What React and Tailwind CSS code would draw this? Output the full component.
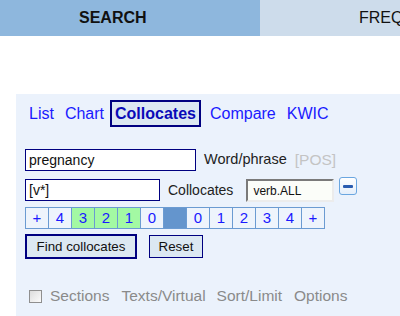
export default function App() {
  const cells = [
    { t: '+' },
    { t: '4' },
    { t: '3', g: true },
    { t: '2', g: true },
    { t: '1', g: true },
    { t: '0' },
    { t: '', b: true },
    { t: '0' },
    { t: '1' },
    { t: '2' },
    { t: '3' },
    { t: '4' },
    { t: '+' },
  ];
  return (
    <div className="w-[400px] h-[316px] overflow-hidden bg-white font-['Liberation_Sans',Arial,sans-serif]">
      <div className="flex h-[36px]">
        <div className="w-[260px] shrink-0 bg-[#8eb7dd] flex items-center pl-[79px] text-[16px] font-bold text-[#111]">
          SEARCH
        </div>
        <div className="flex-1 bg-[#cddceb] flex items-center pl-[99px] text-[16px] text-[#111] whitespace-nowrap overflow-hidden">
          FREQ
        </div>
      </div>

      <div className="ml-[16px] mt-[58px] h-[222px] bg-[#ebf2fc] pt-[6px] pl-[9px]">
        {/* tabs */}
        <div className="flex items-center h-[27px] text-[16px] text-[#1a1aff] whitespace-nowrap">
          <span className="ml-[4px]">List</span>
          <span className="ml-[11px]">Chart</span>
          <span className="ml-[6px] h-[27px] border-2 border-[#000080] bg-[#dce8f2] px-[3px] flex items-center font-bold text-[#0a0ab8]">
            Collocates
          </span>
          <span className="ml-[9px]">Compare</span>
          <span className="ml-[11px]">KWIC</span>
        </div>

        {/* row 1 */}
        <div className="mt-[22px] flex items-center h-[22px] whitespace-nowrap">
          <div className="w-[171px] h-[22px] border border-[#000080] bg-white pl-[3px] flex items-center text-[14px] text-[#111]">
            pregnancy
          </div>
          <span className="ml-[8px] text-[14.5px] text-[#222]">Word/phrase</span>
          <span className="ml-[8px] text-[15.5px] text-[#c4c4c4]">[POS]</span>
        </div>

        {/* row 2 */}
        <div className="mt-[6px] flex items-start whitespace-nowrap">
          <div className="mt-[2px] w-[135px] h-[22px] border border-[#000080] bg-white pl-[3px] flex items-center text-[14px] text-[#111]">
            [v*]
          </div>
          <span className="mt-[2px] h-[22px] ml-[8px] flex items-center text-[14px] text-[#222]">Collocates</span>
          <div className="mt-[2px] ml-[13px] w-[88px] h-[23px] border-2 border-t-[#7a7a7a] border-l-[#7a7a7a] border-r-[#ececec] border-b-[#ececec] bg-[#fbfdf9] pl-[5px] flex items-center text-[12px] text-[#111]">
            verb.ALL
          </div>
          <div className="ml-[5px] w-[18px] h-[18px] rounded-[3px] border border-[#6aa6e0] bg-gradient-to-b from-[#ffffff] to-[#e4eefa] flex items-center justify-center">
            <div className="w-[10px] h-[3px] rounded-[1px] bg-[#2a5cb0]"></div>
          </div>
        </div>

        {/* span row */}
        <div className="mt-[5px] flex w-[300px] h-[22px] border-l border-t border-b border-[#6b9bd2]">
          {cells.map((c, i) => (
            <div
              key={i}
              className={
                'w-[23px] h-[20px] border-r border-[#6b9bd2] flex items-center justify-center text-[15px] text-[#1a1aff] ' +
                (c.g ? 'bg-[#a3f9a3]' : c.b ? 'bg-[#6495cd]' : 'bg-[#eef4fc]')
              }
            >
              {c.t}
            </div>
          ))}
        </div>

        {/* buttons */}
        <div className="mt-[5px] flex items-center whitespace-nowrap">
          <div className="w-[112px] h-[25px] border-2 border-[#000080] bg-[#dce8f2] flex items-center justify-center text-[13.33px] text-[#111]">
            Find collocates
          </div>
          <div className="ml-[12px] w-[54px] h-[23px] border border-[#000080] bg-[#dce8f2] flex items-center justify-center text-[13.33px] text-[#111]">
            Reset
          </div>
        </div>

        {/* bottom options */}
        <div className="mt-[28px] flex items-center h-[18px] text-[15.5px] text-[#8a8a8a] whitespace-nowrap">
          <div className="ml-[4px] w-[13px] h-[13px] border border-[#8f8f8f] bg-gradient-to-br from-[#dcdcdc] to-[#fbfbfb]"></div>
          <span className="ml-[8px]">Sections</span>
          <span className="ml-[12px]">Texts/Virtual</span>
          <span className="ml-[11px]">Sort/Limit</span>
          <span className="ml-[12px]">Options</span>
        </div>
      </div>
    </div>
  );
}
